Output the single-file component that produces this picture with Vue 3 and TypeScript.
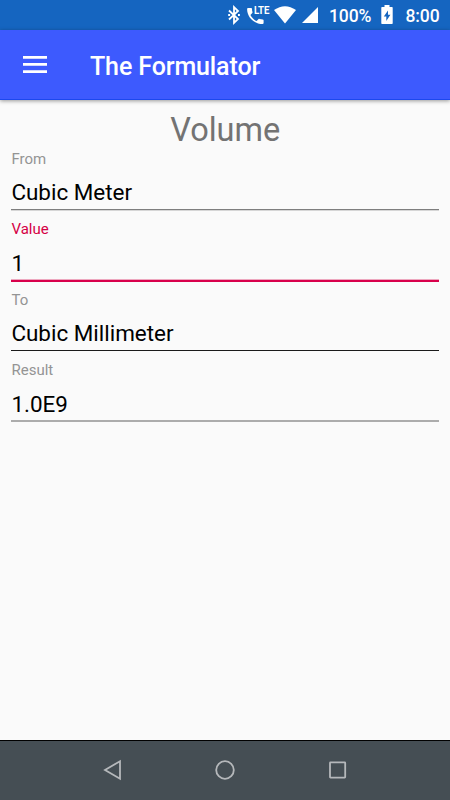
<script setup lang="ts">
interface Field {
  label: string
  value: string
  state: string
}

const fields: Field[] = [
  { label: 'From', value: 'Cubic Meter', state: 'normal' },
  { label: 'Value', value: '1', state: 'focused' },
  { label: 'To', value: 'Cubic Millimeter', state: 'strong' },
  { label: 'Result', value: '1.0E9', state: 'light' },
]
</script>

<template>
  <div class="screen">
    <header class="status">
      <svg class="bt" width="14" height="20" viewBox="0 0 14 20" fill="none" stroke="#fff" stroke-width="1.8">
        <path d="M2 5.5 11 14 7 17.8V2.2L11 6 2 14.5" />
        <path d="M1.2 10h1.9M11 10h1.9" />
      </svg>
      <svg class="call" width="24" height="20" viewBox="0 0 24 20">
        <path fill="#fff" d="M1 3h3.200c.5 0 .8.4.8.9 0 1.100.2 2.200.5 3.200.1.300 0 .700-.2.900L3.400 10c1.400 2.700 3.500 4.700 6.200 6.100l2-2c.3-.3.600-.300.900-.200 1 .3 2.100.500 3.200.500.500 0 .9.400.9.900v2.800c0 .5-.4.900-.9.900C7.200 19 .1 12.300.1 3.900.1 3.400.5 3 1 3Z" />
        <text class="lte" x="6.900" y="8.900" textLength="15.500" lengthAdjust="spacingAndGlyphs">LTE</text>
      </svg>
      <svg class="wifi" width="22" height="18" viewBox="0 0 22 18">
        <path fill="#fff" d="M0 4.100Q11-3.600 22 4.100L11 17.500Z" />
      </svg>
      <svg class="cell" width="16" height="16" viewBox="0 0 16 16"><path fill="#fff" d="M0 16 16 0V16Z" /></svg>
      <span class="percent">100%</span>
      <svg class="battery" width="12" height="20" viewBox="0 0 12 20">
        <path fill="#fff" d="M1 2h2.500V0h5v2H11q.7 0 .7.700V18.300q0 .7-.7.700H1q-.7 0-.7-.7V2.700Q.3 2 1 2Z" />
        <path fill="#1565c0" d="M7 5.500 2.800 11.500h2.500V16l4.100-6.300H7Z" />
      </svg>
      <span class="clock">8:00</span>
    </header>

    <div class="toolbar">
      <svg class="menu" width="24" height="17" viewBox="0 0 24 17">
        <path fill="#fff" d="M0 0h24v2.700H0zM0 7.100h24v2.700H0zM0 14.200h24v2.700H0z" />
      </svg>
      <span class="app-name">The Formulator</span>
    </div>

    <main class="content">
      <h1>Volume</h1>
      <div v-for="field in fields" :key="field.label" class="field" :class="field.state">
        <div class="label">{{ field.label }}</div>
        <div class="value">{{ field.value }}</div>
        <div class="line"></div>
      </div>
    </main>

    <nav class="navigation">
      <svg width="20" height="22" viewBox="0 0 20 22"><path d="M18 2.200V19.800L3 11Z" /></svg>
      <svg width="22" height="22" viewBox="0 0 22 22"><circle cx="11" cy="11" r="8.800" /></svg>
      <svg width="20" height="22" viewBox="0 0 20 22"><rect x="2" y="3.400" width="15.200" height="15.200" rx=".5" /></svg>
    </nav>
  </div>
</template>

<style>
body {
  margin: 0;
}
</style>

<style scoped>
.screen {
  width: 450px;
  height: 800px;
  display: flex;
  flex-direction: column;
  overflow: hidden;
  background: #fafafa;
  font-family: Roboto, sans-serif;
}

svg {
  display: block;
  flex: none;
}

.status {
  height: 30px;
  flex: none;
  display: flex;
  align-items: flex-start;
  box-sizing: border-box;
  padding-left: 227px;
  background: #1565c0;
  color: #fff;
  font-size: 17.5px;
  font-weight: 500;
  letter-spacing: -0.1px;
  line-height: 20px;
  white-space: nowrap;
}

.bt {
  margin-top: 5px;
}

.call {
  margin: 5px 0 0 6px;
}

.lte {
  fill: #fff;
  font-size: 10px;
  font-weight: 700;
  letter-spacing: 0;
}

.wifi {
  margin: 6px 0 0 3px;
}

.cell {
  margin: 7px 0 0 6px;
}

.percent {
  width: 43px;
  margin: 6px 0 0 11px;
}

.battery {
  margin: 5px 0 0 9px;
}

.clock {
  margin: 6px 0 0 12.5px;
}

.toolbar {
  height: 70px;
  flex: none;
  display: flex;
  align-items: center;
  box-sizing: border-box;
  padding-left: 23px;
  background: #3d5afe;
  border-bottom: 1px solid #1c48ee;
  box-shadow: 0 1px 4px rgba(0, 0, 0, 0.4);
  color: #fff;
}

.app-name {
  margin: 4px 0 0 43px;
  font-size: 25px;
  font-weight: 500;
  letter-spacing: -0.12px;
  line-height: 30px;
}

.content {
  flex: 1;
  padding: 9px 11.5px 0 11px;
}

h1 {
  margin: 0;
  height: 40px;
  padding-left: 1px;
  color: #737373;
  font-size: 32.5px;
  font-weight: 400;
  line-height: 43px;
  text-align: center;
}

.field {
  height: 70.4px;
  display: flex;
  flex-direction: column;
}

.label {
  height: 28.4px;
  padding-left: 0.5px;
  color: #949494;
  font-size: 15px;
  line-height: 20px;
}

.value {
  height: 31.6px;
  padding-left: 0.4px;
  color: #000;
  font-size: 22.45px;
  line-height: 30.6px;
}

.line {
  height: 2px;
  flex: none;
  background: linear-gradient(#7e7e7e 50%, #d6d6d6 50%);
}

.focused .label {
  color: #d50045;
}

.focused .line {
  height: 3px;
  background: linear-gradient(#eda8bf 33.33%, #d8004b 33.33%);
}

.strong .line {
  height: 1px;
  background: #1a1a1a;
}

.light .line {
  background: #acacac;
}

.navigation {
  height: 60px;
  flex: none;
  display: flex;
  align-items: center;
  justify-content: center;
  gap: 92px;
  box-sizing: border-box;
  padding-bottom: 1px;
  background: #454e54;
  border-top: 1px solid #000;
}

.navigation svg {
  fill: none;
  stroke: #b5b8bb;
  stroke-width: 1.8;
}
</style>
